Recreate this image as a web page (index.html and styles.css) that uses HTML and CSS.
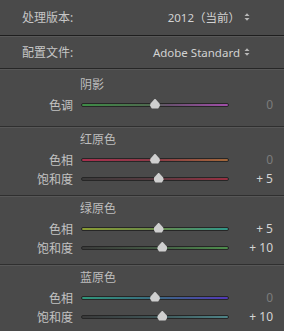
FILE: index.html
```html
<!DOCTYPE html>
<html lang="zh-CN">
<head>
    <meta charset="UTF-8">
    <meta name="viewport" content="width=device-width, initial-scale=1.0">
    <title>相机校准</title>
    <link rel="stylesheet" href="styles.css">
</head>
<body>
    <div class="panel">
        <div class="top-row first">
            <span class="top-label">处理版本:</span>
            <span class="top-value">2012（当前）
                <svg class="updown" width="6" height="10" viewBox="0 0 6 10"><path d="M0.5 4 L3 1.2 L5.5 4 Z M0.5 6 L3 8.8 L5.5 6 Z" fill="#b8b8b8"/></svg>
            </span>
        </div>
        <div class="top-row">
            <span class="top-label">配置文件:</span>
            <span class="top-value">Adobe Standard
                <svg class="updown" width="6" height="10" viewBox="0 0 6 10"><path d="M0.5 4 L3 1.2 L5.5 4 Z M0.5 6 L3 8.8 L5.5 6 Z" fill="#b8b8b8"/></svg>
            </span>
        </div>

        <div class="group shadows">
            <div class="group-title">阴影</div>
            <div class="slider-row">
                <span class="slider-label">色调</span>
                <div class="track tint"><span class="thumb" style="left: 50%"></span></div>
                <span class="slider-value zero">0</span>
            </div>
        </div>

        <div class="group">
            <div class="group-title">红原色</div>
            <div class="slider-row">
                <span class="slider-label">色相</span>
                <div class="track red-hue"><span class="thumb" style="left: 50%"></span></div>
                <span class="slider-value zero">0</span>
            </div>
            <div class="slider-row">
                <span class="slider-label">饱和度</span>
                <div class="track red-sat"><span class="thumb" style="left: 52.5%"></span></div>
                <span class="slider-value">+ 5</span>
            </div>
        </div>

        <div class="group">
            <div class="group-title">绿原色</div>
            <div class="slider-row">
                <span class="slider-label">色相</span>
                <div class="track green-hue"><span class="thumb" style="left: 52.5%"></span></div>
                <span class="slider-value">+ 5</span>
            </div>
            <div class="slider-row">
                <span class="slider-label">饱和度</span>
                <div class="track green-sat"><span class="thumb" style="left: 55%"></span></div>
                <span class="slider-value">+ 10</span>
            </div>
        </div>

        <div class="group">
            <div class="group-title">蓝原色</div>
            <div class="slider-row">
                <span class="slider-label">色相</span>
                <div class="track blue-hue"><span class="thumb" style="left: 50%"></span></div>
                <span class="slider-value zero">0</span>
            </div>
            <div class="slider-row">
                <span class="slider-label">饱和度</span>
                <div class="track blue-sat"><span class="thumb" style="left: 55%"></span></div>
                <span class="slider-value">+ 10</span>
            </div>
        </div>
    </div>
</body>
</html>
```

FILE: styles.css
```css
body {
    margin: 0;
    background-color: #4a4a4a;
    font-family: "Noto Sans", "Noto Sans CJK SC", sans-serif;
    font-size: 12px;
    color: #c6c6c6;
}
.panel {
    width: 284px;
    height: 331px;
    overflow: hidden;
}
.top-row {
    display: flex;
    justify-content: space-between;
    align-items: center;
    height: 32px;
    padding: 0 34px 0 22px;
    border-top: 1px solid #1e1e1e;
    box-shadow: inset 0 1px 0 #585858;
}
.top-row.first {
    height: 34px;
    border-top: none;
    box-shadow: none;
    padding-bottom: 1px;
}
.top-value {
    display: flex;
    align-items: center;
    font-size: 11.5px;
    color: #d2d2d2;
}
.updown {
    margin-left: 4px;
}
.group {
    border-top: 1px solid #2f2f2f;
    box-shadow: inset 0 1px 0 #575757;
    padding: 3px 0 6px;
    height: 59px;
}
.group.shadows {
    padding-top: 6px;
    height: 45px;
    border-top-color: #262626;
}
.group-title {
    height: 20px;
    line-height: 20px;
    padding-left: 80px;
    color: #bdbdbd;
}
.slider-row {
    display: grid;
    grid-template-columns: 73px 148px 1fr;
    column-gap: 8px;
    align-items: center;
    height: 19px;
    padding-right: 11px;
}
.slider-label {
    text-align: right;
    color: #c2c2c2;
}
.slider-value {
    text-align: right;
    color: #d4d4d4;
}
.slider-value.zero {
    color: #7c7c7c;
}
.track {
    position: relative;
    height: 2px;
    border: 1px solid #262626;
    border-radius: 3px;
}
.thumb {
    position: absolute;
    top: -5px;
    width: 10px;
    height: 10px;
    margin-left: -5px;
    background: #cfcfcf;
    clip-path: polygon(50% 0, 95% 50%, 100% 72%, 82% 100%, 18% 100%, 0 72%, 5% 50%);
}
.tint {
    background: linear-gradient(to right, #3e8c46, #4d6a4d 45%, #6a5070 60%, #a04ea8);
}
.red-hue {
    background: linear-gradient(to right, #a8304e, #8a3a46 50%, #a2683a);
}
.red-sat {
    background: linear-gradient(to right, #3a3a3a, #5a3a40 50%, #9a3042);
}
.green-hue {
    background: linear-gradient(to right, #8a9c34, #6a8a48 50%, #30988a);
}
.green-sat {
    background: linear-gradient(to right, #3a3a3a, #445a44 50%, #4e8e4c);
}
.blue-hue {
    background: linear-gradient(to right, #30967a, #3a6a80 50%, #5238b8);
}
.blue-sat {
    background: linear-gradient(to right, #3a3a3a, #3e5456 50%, #4e8488);
}
```
